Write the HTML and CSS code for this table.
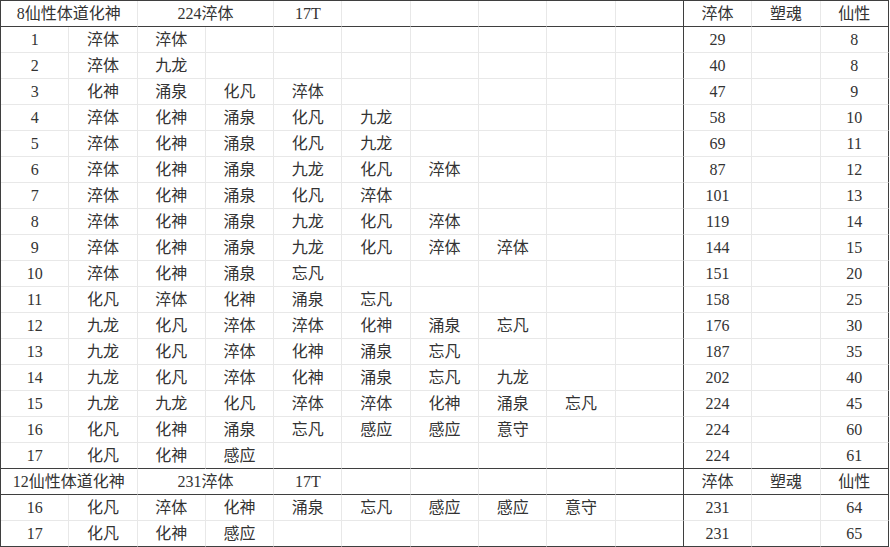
FILE: index.html
```html
<!DOCTYPE html>
<html lang="zh">
<head>
<meta charset="utf-8">
<title>仙性体道化神</title>
<link rel="stylesheet" href="styles.css">
</head>
<body>
<table class="sheet">
  <tbody>
    <tr class="head">
      <td colspan="2">8仙性体道化神</td><td colspan="2">224淬体</td><td>17T</td><td></td><td></td><td></td><td></td><td class="sep"></td><td>淬体</td><td>塑魂</td><td class="last">仙性</td>
    </tr>
    <tr><td>1</td><td>淬体</td><td>淬体</td><td></td><td></td><td></td><td></td><td></td><td></td><td class="sep"></td><td>29</td><td></td><td class="last">8</td></tr>
    <tr><td>2</td><td>淬体</td><td>九龙</td><td></td><td></td><td></td><td></td><td></td><td></td><td class="sep"></td><td>40</td><td></td><td class="last">8</td></tr>
    <tr><td>3</td><td>化神</td><td>涌泉</td><td>化凡</td><td>淬体</td><td></td><td></td><td></td><td></td><td class="sep"></td><td>47</td><td></td><td class="last">9</td></tr>
    <tr><td>4</td><td>淬体</td><td>化神</td><td>涌泉</td><td>化凡</td><td>九龙</td><td></td><td></td><td></td><td class="sep"></td><td>58</td><td></td><td class="last">10</td></tr>
    <tr><td>5</td><td>淬体</td><td>化神</td><td>涌泉</td><td>化凡</td><td>九龙</td><td></td><td></td><td></td><td class="sep"></td><td>69</td><td></td><td class="last">11</td></tr>
    <tr><td>6</td><td>淬体</td><td>化神</td><td>涌泉</td><td>九龙</td><td>化凡</td><td>淬体</td><td></td><td></td><td class="sep"></td><td>87</td><td></td><td class="last">12</td></tr>
    <tr><td>7</td><td>淬体</td><td>化神</td><td>涌泉</td><td>化凡</td><td>淬体</td><td></td><td></td><td></td><td class="sep"></td><td>101</td><td></td><td class="last">13</td></tr>
    <tr><td>8</td><td>淬体</td><td>化神</td><td>涌泉</td><td>九龙</td><td>化凡</td><td>淬体</td><td></td><td></td><td class="sep"></td><td>119</td><td></td><td class="last">14</td></tr>
    <tr><td>9</td><td>淬体</td><td>化神</td><td>涌泉</td><td>九龙</td><td>化凡</td><td>淬体</td><td>淬体</td><td></td><td class="sep"></td><td>144</td><td></td><td class="last">15</td></tr>
    <tr><td>10</td><td>淬体</td><td>化神</td><td>涌泉</td><td>忘凡</td><td></td><td></td><td></td><td></td><td class="sep"></td><td>151</td><td></td><td class="last">20</td></tr>
    <tr><td>11</td><td>化凡</td><td>淬体</td><td>化神</td><td>涌泉</td><td>忘凡</td><td></td><td></td><td></td><td class="sep"></td><td>158</td><td></td><td class="last">25</td></tr>
    <tr><td>12</td><td>九龙</td><td>化凡</td><td>淬体</td><td>淬体</td><td>化神</td><td>涌泉</td><td>忘凡</td><td></td><td class="sep"></td><td>176</td><td></td><td class="last">30</td></tr>
    <tr><td>13</td><td>九龙</td><td>化凡</td><td>淬体</td><td>化神</td><td>涌泉</td><td>忘凡</td><td></td><td></td><td class="sep"></td><td>187</td><td></td><td class="last">35</td></tr>
    <tr><td>14</td><td>九龙</td><td>化凡</td><td>淬体</td><td>化神</td><td>涌泉</td><td>忘凡</td><td>九龙</td><td></td><td class="sep"></td><td>202</td><td></td><td class="last">40</td></tr>
    <tr><td>15</td><td>九龙</td><td>九龙</td><td>化凡</td><td>淬体</td><td>淬体</td><td>化神</td><td>涌泉</td><td>忘凡</td><td class="sep"></td><td>224</td><td></td><td class="last">45</td></tr>
    <tr><td>16</td><td>化凡</td><td>化神</td><td>涌泉</td><td>忘凡</td><td>感应</td><td>感应</td><td>意守</td><td></td><td class="sep"></td><td>224</td><td></td><td class="last">60</td></tr>
    <tr class="before-head"><td>17</td><td>化凡</td><td>化神</td><td>感应</td><td></td><td></td><td></td><td></td><td></td><td class="sep"></td><td>224</td><td></td><td class="last">61</td></tr>
    <tr class="head">
      <td colspan="2">12仙性体道化神</td><td colspan="2">231淬体</td><td>17T</td><td></td><td></td><td></td><td></td><td class="sep"></td><td>淬体</td><td>塑魂</td><td class="last">仙性</td>
    </tr>
    <tr><td>16</td><td>化凡</td><td>淬体</td><td>化神</td><td>涌泉</td><td>忘凡</td><td>感应</td><td>感应</td><td>意守</td><td class="sep"></td><td>231</td><td></td><td class="last">64</td></tr>
    <tr class="end"><td>17</td><td>化凡</td><td>化神</td><td>感应</td><td></td><td></td><td></td><td></td><td></td><td class="sep"></td><td>231</td><td></td><td class="last">65</td></tr>
  </tbody>
</table>
</body>
</html>
```
FILE: styles.css
```css
html, body {
  margin: 0;
  padding: 0;
  background: #ffffff;
}

.sheet {
  table-layout: fixed;
  width: 889px;
  border-collapse: separate;
  border-spacing: 0;
  border-top: 1px solid #3f3f3f;
  border-left: 1px solid #3f3f3f;
  font-family: "Liberation Serif", "Noto Sans CJK SC", serif;
  font-size: 16px;
  color: #333333;
}

.sheet td {
  height: 24px;
  padding: 1px 0 0;
  text-align: center;
  vertical-align: middle;
  line-height: 24px;
  white-space: nowrap;
  overflow: hidden;
  border-right: 1px solid #e8e8e8;
  border-bottom: 1px solid #e8e8e8;
}

.sheet .head td,
.sheet .before-head td,
.sheet .end td {
  border-bottom-color: #3f3f3f;
}

.sheet td.sep,
.sheet td.last {
  border-right-color: #3f3f3f;
}
```
